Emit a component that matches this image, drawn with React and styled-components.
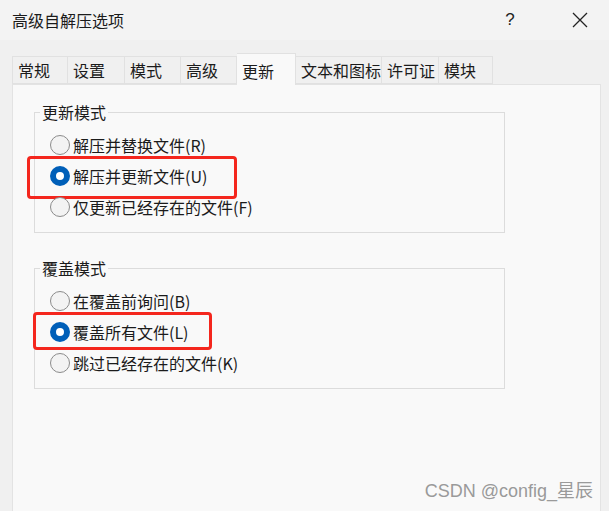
import styled, { createGlobalStyle } from "styled-components";

const GlobalStyle = createGlobalStyle`
    html, body {
        margin: 0;
        padding: 0;
        background: #f0f0f0;
    }
    * {
        box-sizing: border-box;
    }
`

const FONT = `"Noto Sans CJK SC", "Noto Sans", sans-serif`

const Tabs = [
    {id: 1, title: '常规', width: 56},
    {id: 2, title: '设置', width: 57},
    {id: 3, title: '模式', width: 56},
    {id: 4, title: '高级', width: 56},
    {id: 5, title: '更新', width: 59, active: true},
    {id: 6, title: '文本和图标', width: 86},
    {id: 7, title: '许可证', width: 57},
    {id: 8, title: '模块', width: 54},
]

const Groups = [
    {
        id: 1,
        title: '更新模式',
        gap: 0,
        items: [
            {label: '解压并替换文件(R)'},
            {label: '解压并更新文件(U)', checked: true, mark: {left: -23, top: -4, width: 210, height: 43}},
            {label: '仅更新已经存在的文件(F)'},
        ],
    },
    {
        id: 2,
        title: '覆盖模式',
        gap: 24,
        items: [
            {label: '在覆盖前询问(B)'},
            {label: '覆盖所有文件(L)', checked: true, mark: {left: -17, top: -4, width: 179, height: 38}},
            {label: '跳过已经存在的文件(K)'},
        ],
    },
]

const Window = styled.div`
    position: relative;
    width: 609px;
    height: 511px;
    background: #f0f0f0;
    overflow: hidden;
    display: flex;
    flex-direction: column;
    font-family: ${FONT};
    color: #1b1b1b;
`

const TitleBar = styled.div`
    height: 40px;
    display: flex;
    align-items: center;
    padding: 0 9px 0 12px;
    background: #f3f3f3;
`

const Title = styled.div`
    flex: 1;
    font-size: 16px;
    line-height: 20px;
    margin-top: -1px;
`

const TitleButton = styled.div`
    width: ${p => p.$w}px;
    margin-right: ${p => p.$mr || 0}px;
    height: 40px;
    display: flex;
    align-items: center;
    justify-content: center;
    font-family: "Liberation Sans", sans-serif;
    font-size: 17px;
    color: #222;
`

const Body = styled.div`
    flex: 1;
    display: flex;
    flex-direction: column;
    padding: 13px 8px 0 12px;
`

const TabStrip = styled.div`
    display: flex;
    align-items: flex-end;
    height: 31px;
    position: relative;
    z-index: 1;
`

const Tab = styled.div`
    width: ${p => p.$w}px;
    height: ${p => p.$active ? 32 : 28}px;
    margin-bottom: ${p => p.$active ? -1 : 0}px;
    padding: ${p => p.$active ? '3px 0 0 5px' : '0 0 0 5px'};
    display: flex;
    align-items: center;
    background: ${p => p.$active ? '#f9f9f9' : '#f0f0f0'};
    border: 1px solid #e1e1e1;
    border-bottom: ${p => p.$active ? 'none' : '1px solid #e1e1e1'};
    border-left-width: ${p => p.$first ? 1 : 0}px;
    font-size: 16px;
    line-height: 20px;
    white-space: nowrap;
    overflow: hidden;
`

const Panel = styled.div`
    flex: 1;
    background: #f9f9f9;
    border: 1px solid #e3e3e3;
    border-bottom: none;
    padding: 16px 0 0 21px;
`

const GroupBox = styled.fieldset`
    width: 471px;
    height: 132px;
    margin: ${p => p.$gap}px 0 0 0;
    padding: 0 0 0 5px;
    border: 1px solid #dcdcdc;
`

const GroupTitle = styled.legend`
    padding: 0 2px;
    font-size: 16px;
    line-height: 22px;
`

const RadioList = styled.div`
    display: flex;
    flex-direction: column;
    margin: 6px 0 0 10px;
`

const RadioRow = styled.label`
    position: relative;
    display: flex;
    align-items: center;
    gap: 3px;
    height: 31px;
    font-size: 16px;
    line-height: 20px;
    width: max-content;
`

const RadioDot = styled.span`
    width: 20px;
    height: 20px;
    border-radius: 50%;
    flex: none;
    border: ${p => p.$checked ? '6px solid #005fb8' : '1px solid #8b8b8b'};
    background: ${p => p.$checked ? '#ffffff' : '#f3f3f3'};
`

const Highlight = styled.span`
    position: absolute;
    border: 3px solid #f4261d;
    border-radius: 4px;
    pointer-events: none;
`

const Watermark = styled.div`
    position: absolute;
    right: 16px;
    bottom: 9px;
    font-family: "Liberation Sans", "Noto Sans CJK SC", sans-serif;
    font-size: 18px;
    color: #9a9a9a;
`

function CloseIcon() {
    return (
        <svg width="16" height="16" viewBox="0 0 16 16">
            <path d="M1 1 L15 15 M15 1 L1 15" stroke="#222" strokeWidth="1.3" fill="none"/>
        </svg>
    )
}

function App() {
    return (
        <Window>
            <GlobalStyle/>
            <TitleBar>
                <Title>高级自解压选项</Title>
                <TitleButton $w={30} $mr={35}>?</TitleButton>
                <TitleButton $w={40}><CloseIcon/></TitleButton>
            </TitleBar>
            <Body>
                <TabStrip>
                    {Tabs.map((tab, i) => (
                        <Tab key={tab.id} $w={tab.width} $active={tab.active} $first={i === 0}>
                            {tab.title}
                        </Tab>
                    ))}
                </TabStrip>
                <Panel>
                    {Groups.map((group) => (
                        <GroupBox key={group.id} $gap={group.gap}>
                            <GroupTitle>{group.title}</GroupTitle>
                            <RadioList>
                                {group.items.map((item) => (
                                    <RadioRow key={item.label}>
                                        <RadioDot $checked={item.checked}/>
                                        {item.label}
                                        {item.mark &&
                                            <Highlight style={{
                                                left: item.mark.left,
                                                top: item.mark.top,
                                                width: item.mark.width,
                                                height: item.mark.height,
                                            }}/>
                                        }
                                    </RadioRow>
                                ))}
                            </RadioList>
                        </GroupBox>
                    ))}
                </Panel>
            </Body>
            <Watermark>CSDN @config_星辰</Watermark>
        </Window>
    )
}

export default App;
